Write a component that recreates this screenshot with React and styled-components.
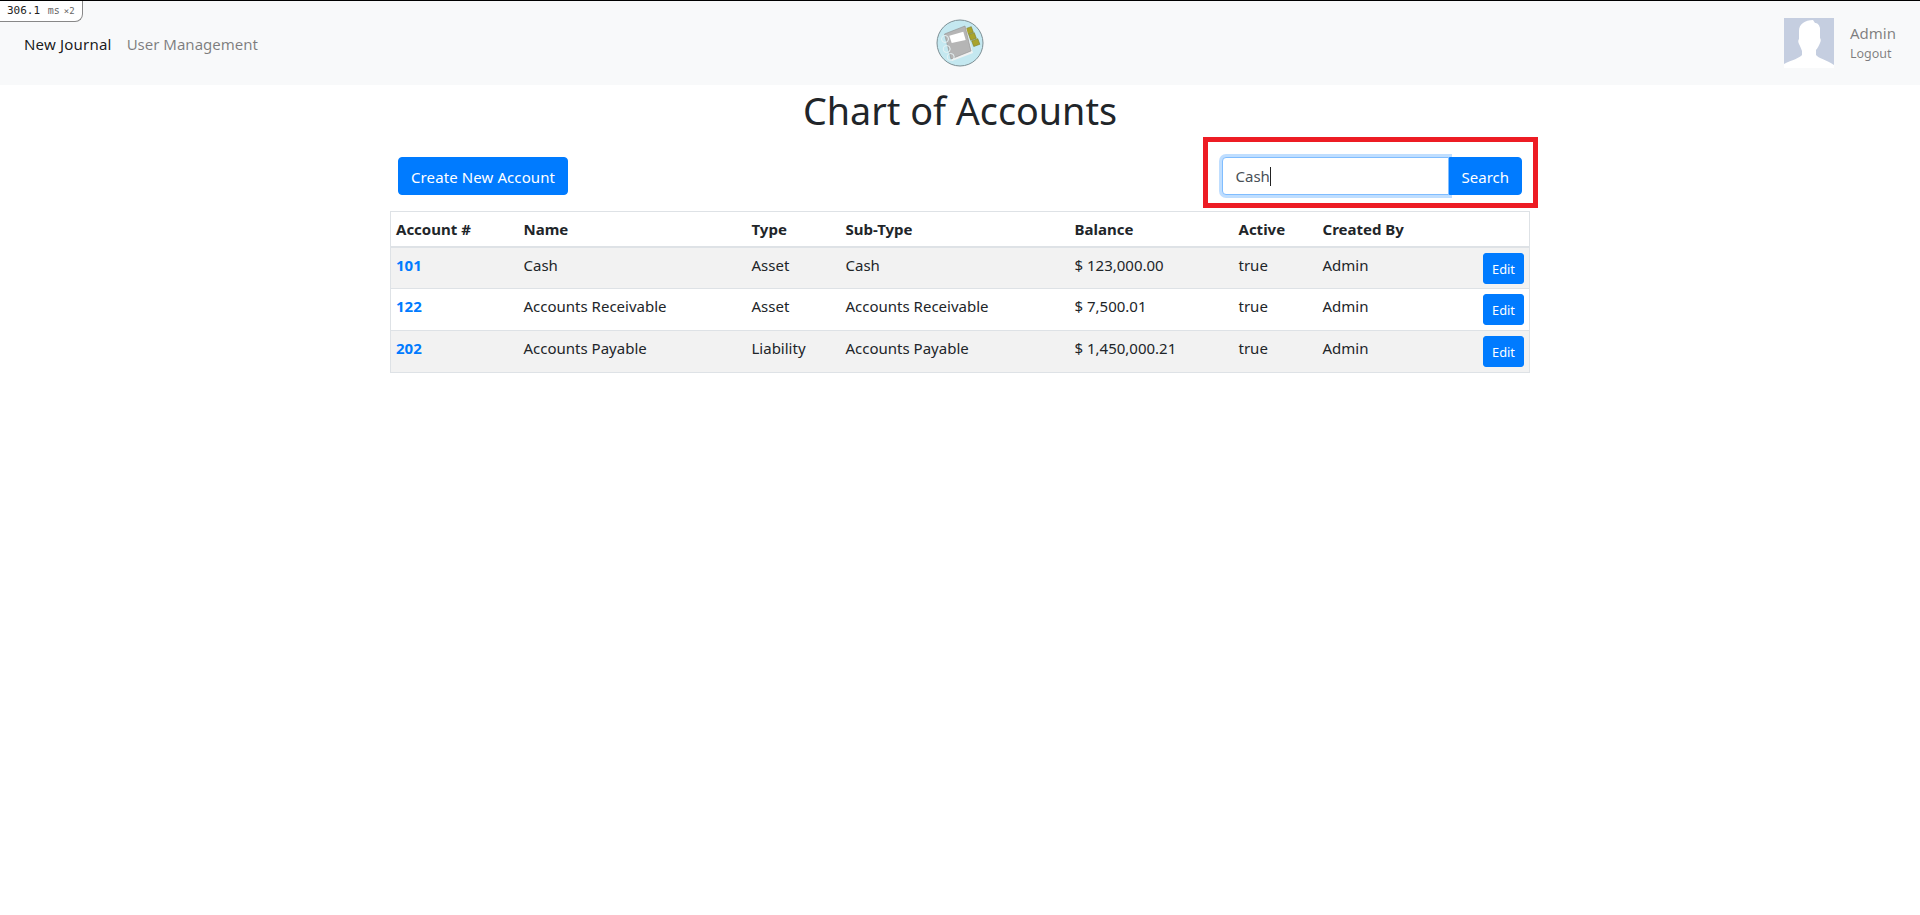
import React from "react";
import styled, { createGlobalStyle } from "styled-components";

const FONT = `"Noto Sans", "Open Sans", "Liberation Sans", sans-serif`;

const GlobalStyle = createGlobalStyle`
  html, body { margin: 0; padding: 0; background: #fff; }
  body { font-family: ${FONT}; font-size: 15px; line-height: 1.5; color: #212529; }
`;

const Page = styled.div`
  position: relative;
  min-height: 915px;
  border-top: 1px solid #000;
  box-sizing: border-box;
`;

const TimerBadge = styled.div`
  position: absolute;
  top: 0;
  left: 0;
  height: 21px;
  width: 83px;
  box-sizing: border-box;
  padding-left: 7px;
  background: #fff;
  border: 1px solid #888;
  border-top: 0;
  border-left: 0;
  border-bottom-right-radius: 8px;
  font-family: "DejaVu Sans Mono", "Liberation Mono", monospace;
  font-size: 11px;
  line-height: 20px;
  color: #222;
  white-space: nowrap;
`;

const TimerUnit = styled.span`
  font-size: 10px;
  color: #666;
  margin-left: 1px;
`;

const TimerCount = styled.span`
  font-size: 9px;
  color: #666;
  margin-left: 4px;
`;

const Navbar = styled.nav`
  height: 84px;
  background: #f8f9fa;
  display: grid;
  grid-template-columns: 1fr auto 1fr;
  align-items: center;
  padding: 0 24px;
  box-sizing: border-box;
`;

const NavLinks = styled.div`
  display: flex;
  gap: 15px;
  margin-top: 2px;
`;

const NavLink = styled.a`
  color: ${(p) => (p.$active ? "rgba(0,0,0,.9)" : "rgba(0,0,0,.5)")};
  letter-spacing: ${(p) => (p.$active ? ".2px" : "0")};
  white-space: nowrap;
`;

const UserArea = styled.div`
  display: flex;
  justify-content: flex-end;
  align-items: center;
  gap: 16px;
`;

const UserText = styled.div`
  display: flex;
  flex-direction: column;
  width: 46px;
  color: rgba(0,0,0,.5);
  line-height: 1;
`;

const UserName = styled.span`
  font-size: 15px;
  margin-bottom: 7px;
`;

const Logout = styled.span`
  font-size: 12.5px;
`;

const Container = styled.main`
  width: 1140px;
  margin: 0 auto;
`;

const Title = styled.h1`
  margin: 0;
  text-align: center;
  font-size: 37.7px;
  font-weight: 400;
  line-height: 52px;
`;

const Toolbar = styled.div`
  display: flex;
  justify-content: space-between;
  align-items: center;
  padding: 20px 8px 16px;
`;

const Button = styled.button`
  height: ${(p) => (p.$small ? "31px" : "38px")};
  padding: 1px ${(p) => (p.$small ? "8px" : "12px")} 0;
  background: #007bff;
  border: 1px solid #007bff;
  border-radius: ${(p) => (p.$joined ? "0 4px 4px 0" : p.$small ? "3px" : "4px")};
  color: #fff;
  font-family: ${FONT};
  font-size: ${(p) => (p.$small ? "12.8px" : "15px")};
  white-space: nowrap;
`;

const CreateButton = styled(Button)`
  letter-spacing: .1px;
`;

const SearchForm = styled.form`
  display: flex;
`;

const SearchInput = styled.div`
  width: 227px;
  height: 38px;
  box-sizing: border-box;
  padding: 1px 13px 0;
  display: flex;
  align-items: center;
  background: #fff;
  border: 1px solid #80bdff;
  border-radius: 4px 0 0 4px;
  box-shadow: 0 0 0 3px rgba(0,123,255,.25);
  color: #495057;
`;

const Caret = styled.span`
  width: 1px;
  height: 19px;
  background: #222;
`;

const Annotation = styled.div`
  position: absolute;
  left: 1203px;
  top: 136px;
  width: 335px;
  height: 71px;
  box-sizing: border-box;
  border: 5px solid #ed1c24;
  pointer-events: none;
`;

const Table = styled.table`
  width: 1139px;
  table-layout: fixed;
  border-collapse: collapse;
  border: 1px solid #dee2e6;
`;

const Th = styled.th`
  width: ${(p) => p.$w}px;
  box-sizing: border-box;
  height: 35px;
  padding: 1px 5px 0;
  text-align: left;
  font-weight: 700;
  border-bottom: 2px solid #dee2e6;
  white-space: nowrap;
`;

const Tr = styled.tr`
  background: ${(p) => (p.$striped ? "#f2f2f2" : "#fff")};
  &:first-child td { padding-bottom: 4px; }
`;

const Td = styled.td`
  padding: 5px;
  border-top: 1px solid #dee2e6;
  vertical-align: top;
  line-height: 25px;
  white-space: nowrap;
`;

const ActionTd = styled(Td)`
  text-align: right;
  line-height: 0;
`;

const AccountLink = styled.a`
  color: #007bff;
  font-weight: 700;
`;

const Logo = () => (
  <svg width="48" height="48" viewBox="0 0 48 48">
    <circle cx="24" cy="24" r="23" fill="#c4e8f0" stroke="#7d8f94" strokeWidth="1" />
    <g fill="#a8a32c" stroke="#77741e" strokeWidth=".5">
      <rect x="30.5" y="8.5" width="6" height="6" transform="rotate(-20 33.5 11.5)" />
      <rect x="33.5" y="14.5" width="6" height="6" transform="rotate(-20 36.5 17.5)" />
      <rect x="36.5" y="20.5" width="6.5" height="6" transform="rotate(-20 40 23.5)" />
    </g>
    <polygon points="10,16 30,8 37,34 16,42" fill="#f0f2f2" />
    <polygon points="8.5,15 29,7 35,32 15,40" fill="#b5b5b5" stroke="#8e8e8e" strokeWidth=".6" />
    <polygon points="13.3,16.7 27.3,12.7 29.7,21 15.7,24" fill="#fff" />
    <g fill="none" stroke="#e6f2f4" strokeWidth="1">
      <circle cx="9" cy="20" r="3.5" />
      <circle cx="10.7" cy="30" r="3.5" />
      <circle cx="14.7" cy="38" r="3.5" />
    </g>
  </svg>
);

const Avatar = () => (
  <svg width="50" height="50" viewBox="0 0 50 50">
    <rect width="50" height="50" fill="#c5cee0" />
    <path
      d="M29 2 C21 2 15 6 15 13 L15 21 C14 22 14 24 15 26 C16 28 17 30 18 33 L18 37 C16 40 8 42 0 46 L0 50 L50 50 L50 47 C43 42 34 40 32 37 L32 32 C34 30 35 27 36 25 C37 23 37 21 36 20 L36 10 C35 6 33 5 31 5 Z"
      fill="#fff"
    />
  </svg>
);

const rows = [
  { no: "101", name: "Cash", type: "Asset", sub: "Cash", balance: "$ 123,000.00" },
  { no: "122", name: "Accounts Receivable", type: "Asset", sub: "Accounts Receivable", balance: "$ 7,500.01" },
  { no: "202", name: "Accounts Payable", type: "Liability", sub: "Accounts Payable", balance: "$ 1,450,000.21" },
];

export default function App() {
  return (
    <Page>
      <GlobalStyle />
      <TimerBadge>306.1 <TimerUnit>ms</TimerUnit><TimerCount>×2</TimerCount></TimerBadge>
      <Navbar>
        <NavLinks>
          <NavLink $active>New Journal</NavLink>
          <NavLink>User Management</NavLink>
        </NavLinks>
        <Logo />
        <UserArea>
          <Avatar />
          <UserText>
            <UserName>Admin</UserName>
            <Logout>Logout</Logout>
          </UserText>
        </UserArea>
      </Navbar>
      <Container>
        <Title>Chart of Accounts</Title>
        <Toolbar>
          <CreateButton>Create New Account</CreateButton>
          <SearchForm>
            <SearchInput>Cash<Caret /></SearchInput>
            <Button type="button" $joined>Search</Button>
          </SearchForm>
        </Toolbar>
        <Table>
          <thead>
            <tr>
              <Th $w={128}>Account #</Th>
              <Th $w={228}>Name</Th>
              <Th $w={94}>Type</Th>
              <Th $w={229}>Sub-Type</Th>
              <Th $w={164}>Balance</Th>
              <Th $w={84}>Active</Th>
              <Th $w={122}>Created By</Th>
              <Th $w={90} />
            </tr>
          </thead>
          <tbody>
            {rows.map((r, i) => (
              <Tr key={r.no} $striped={i % 2 === 0}>
                <Td><AccountLink>{r.no}</AccountLink></Td>
                <Td>{r.name}</Td>
                <Td>{r.type}</Td>
                <Td>{r.sub}</Td>
                <Td>{r.balance}</Td>
                <Td>true</Td>
                <Td>Admin</Td>
                <ActionTd><Button $small>Edit</Button></ActionTd>
              </Tr>
            ))}
          </tbody>
        </Table>
      </Container>
      <Annotation />
    </Page>
  );
}
